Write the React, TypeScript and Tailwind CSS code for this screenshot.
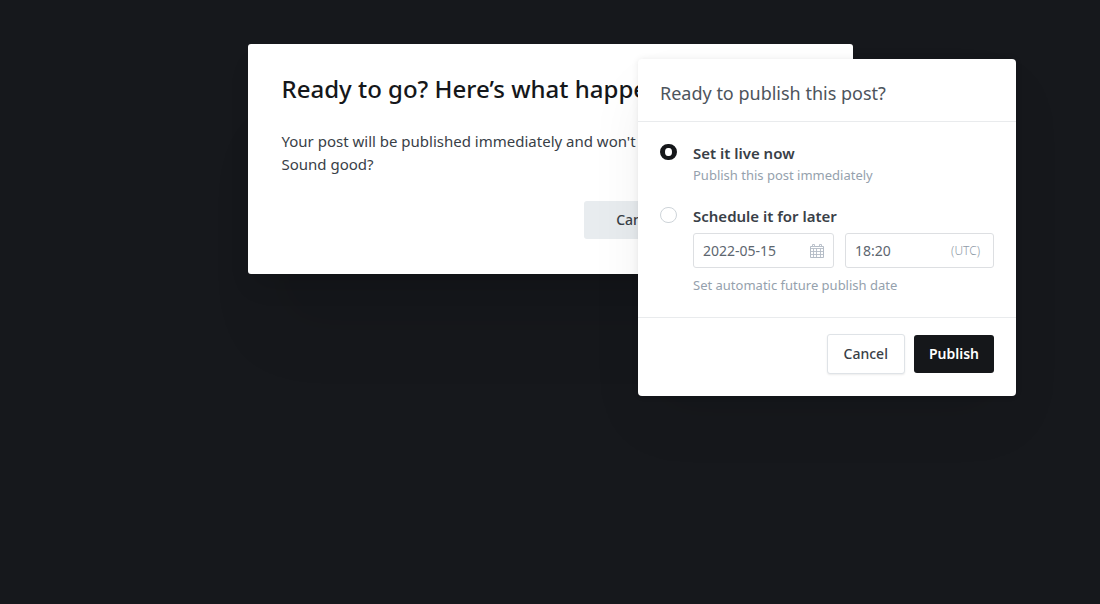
function CalendarIcon() {
  return (
    <svg className="h-4 w-4 shrink-0 text-[#b4bcc6]" viewBox="0 0 16 16" fill="none" stroke="currentColor" aria-hidden="true">
      <path d="M1.5 3.5h13v11h-13z" />
      <path d="M1.5 5.5h13M1.5 8.5h13M1.5 11.5h13M4.5 5.5v9M7.5 5.5v9M11.5 5.5v9" strokeWidth="0.9" />
      <path d="M3.5 1.5h2v2h-2zM10.5 1.5h2v2h-2z" fill="#fff" strokeWidth="0.9" />
    </svg>
  );
}

const radio =
  "m-0 h-4 w-[17px] shrink-0 appearance-none rounded-full border border-[#ced4d9] bg-white checked:border-[5px] checked:border-[#15171a] checked:border-y-4";

function ConfirmDialog() {
  return (
    <section
      aria-labelledby="confirm-title"
      className="col-start-1 row-start-1 mt-11 w-full max-w-[605px] justify-self-center self-start rounded-[3px] bg-white px-[34px] pt-[27px] pb-[35px] shadow-[0_80px_60px_-20px_rgba(0,0,0,0.07),0_16px_24px_-8px_rgba(0,0,0,0.16)]"
    >
      <h1 id="confirm-title" className="truncate text-2xl leading-9 font-medium text-[#15171a]">
        Ready to go? Here’s what happens
      </h1>
      <p className="mt-[23px] text-[15px] leading-[23px] text-[#394047]">
        Your post will be published immediately and won't
        <br />
        Sound good?
      </p>
      <div className="mt-[25px] flex justify-end pr-[126px]">
        <button type="button" className="h-[38px] rounded-[3px] bg-[#e8ecef] px-8 text-sm font-medium text-[#394047]">
          Cancel
        </button>
      </div>
    </section>
  );
}

function PublishDialog() {
  return (
    <form
      aria-labelledby="publish-title"
      onSubmit={(event) => event.preventDefault()}
      className="z-10 col-start-1 row-start-1 mt-[59px] mr-[84px] w-full max-w-[378px] self-start justify-self-end rounded-[4px] bg-white text-[#394047] shadow-[0_0_7px_rgba(0,0,0,0.08),0_2px_2px_rgba(0,0,0,0.02),0_28px_55px_-8px_rgba(0,0,0,0.08)]"
    >
      <header className="border-b border-[#e9ebed] px-[22px] pt-5 pb-[14px]">
        <h2 id="publish-title" className="text-lg leading-7 font-normal text-[#4d545c]">
          Ready to publish this post?
        </h2>
      </header>

      <div className="flex flex-col gap-[22px] px-[22px] pt-[22px] pb-[22px]">
        <div className="flex gap-4">
          <input id="live-now" type="radio" name="when" defaultChecked className={radio} />
          <div>
            <label htmlFor="live-now" className="block text-[15px] leading-[18px] font-semibold">
              Set it live now
            </label>
            <p className="mt-[3px] text-[13px] leading-5 font-normal text-[#95a1ad]">Publish this post immediately</p>
          </div>
        </div>

        <div className="flex gap-4">
          <input id="later" type="radio" name="when" className={radio} />
          <div className="min-w-0 flex-1">
            <label htmlFor="later" className="block text-[15px] leading-[18px] font-semibold">
              Schedule it for later
            </label>
            <div className="mt-2 flex gap-[11px]">
              <div className="flex h-[35px] w-[141px] items-center rounded-[3px] border border-[#dddfe2] pr-2 pl-[9px]">
                <input aria-label="Publish date" defaultValue="2022-05-15" className="min-w-0 flex-1 text-sm text-[#5d666f] outline-none" />
                <CalendarIcon />
              </div>
              <div className="flex h-[35px] min-w-0 flex-1 items-center rounded-[3px] border border-[#dddfe2] pr-[13px] pl-[9px]">
                <input id="time" aria-label="Publish time" defaultValue="18:20" className="min-w-0 flex-1 text-sm text-[#5d666f] outline-none" />
                <label htmlFor="time" className="text-xs font-light text-[#8f9ba8]">
                  (UTC)
                </label>
              </div>
            </div>
            <p className="mt-[7px] text-[13px] leading-5 font-normal text-[#95a1ad]">Set automatic future publish date</p>
          </div>
        </div>
      </div>

      <footer className="flex items-center justify-end gap-[9px] border-t border-[#e9ebed] px-[22px] pt-4 pb-[22px]">
        <button type="button" className="h-10 rounded-[3px] border border-[#dfe3e7] bg-white px-4 text-sm font-medium shadow-[0_1px_2px_rgba(0,0,0,0.08)]">
          Cancel
        </button>
        <button type="submit" className="h-[38px] rounded-[3px] bg-[#15171a] px-[15px] text-sm font-semibold text-white">
          Publish
        </button>
      </footer>
    </form>
  );
}

export default function App() {
  return (
    <main className="grid min-h-screen grid-cols-1 bg-[#16181c] font-['Noto_Sans','Open_Sans',sans-serif]">
      <ConfirmDialog />
      <PublishDialog />
    </main>
  );
}
